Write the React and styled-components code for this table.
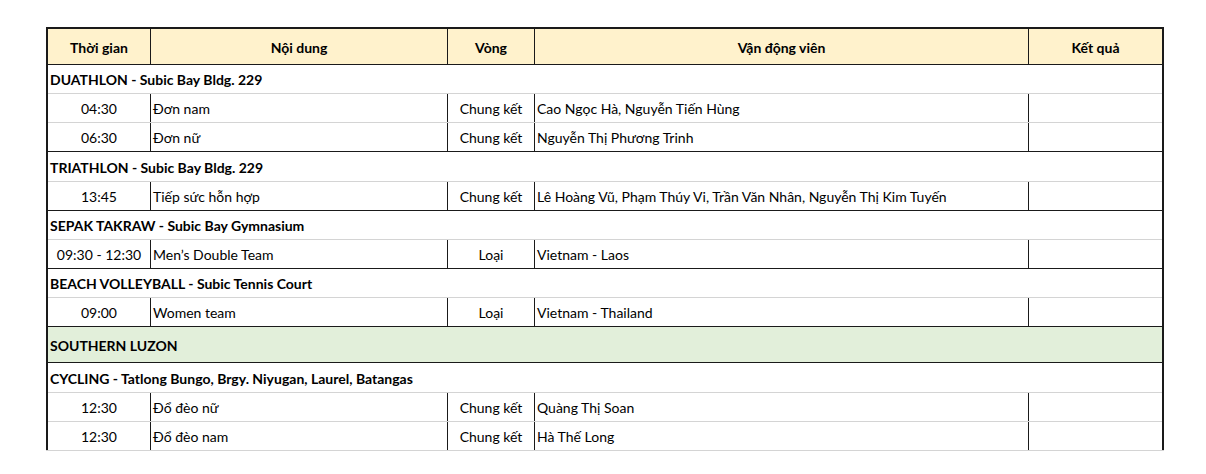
import React from 'react';
import styled, { createGlobalStyle } from 'styled-components';

const GlobalStyle = createGlobalStyle`
    body {
        margin: 0;
        background: #ffffff;
        font-family: Lato, 'Liberation Sans', sans-serif;
        color: #000000;
    }
`

const Page = styled.div`
    padding: 27px 0 0 46px;
`

const Sheet = styled.div`
    width: 1118px;
    border: 2px solid #1a1a1a;
    border-bottom: none;
    box-sizing: border-box;
    font-size: 14px;
`

const Row = styled.div`
    display: grid;
    grid-template-columns: 102px 297px 87px 494px 134px;
    height: ${p => p.$h || 29}px;
    box-sizing: border-box;
    border-top: 1px solid ${p => (p.$dark ? '#1a1a1a' : '#d4d4d4')};
    background: ${p => p.$bg || 'transparent'};
`

const HeadRow = styled(Row)`
    background: #fff2cc;
    border-top: none;
    font-weight: bold;
`

const Cell = styled.div`
    display: flex;
    align-items: center;
    justify-content: ${p => (p.$left ? 'flex-start' : 'center')};
    padding: 1px 2px 0;
    box-sizing: border-box;
    white-space: nowrap;
    overflow: hidden;
    border-left: ${p => (p.$first ? 'none' : '1px solid #1a1a1a')};
`

const Section = styled.div`
    grid-column: 1 / -1;
    display: flex;
    align-items: center;
    padding: 1px 2px 0;
    font-weight: bold;
`

const Bottom = styled.div`
    width: 1118px;
    height: 1px;
    background: #d4d4d4;
`

const rows = [
    { section: 'DUATHLON - Subic Bay Bldg. 229', h: 29 },
    { time: '04:30', event: 'Đơn nam', round: 'Chung kết', athletes: 'Cao Ngọc Hà, Nguyễn Tiến Hùng' },
    { time: '06:30', event: 'Đơn nữ', round: 'Chung kết', athletes: 'Nguyễn Thị Phương Trinh' },
    { section: 'TRIATHLON - Subic Bay Bldg. 229', h: 30 },
    { time: '13:45', event: 'Tiếp sức hỗn hợp', round: 'Chung kết', athletes: 'Lê Hoàng Vũ, Phạm Thúy Vi, Trần Văn Nhân, Nguyễn Thị Kim Tuyến' },
    { section: 'SEPAK TAKRAW - Subic Bay Gymnasium', h: 29 },
    { time: '09:30 - 12:30', event: 'Men’s Double Team', round: 'Loại', athletes: 'Vietnam - Laos' },
    { section: 'BEACH VOLLEYBALL - Subic Tennis Court', h: 29 },
    { time: '09:00', event: 'Women team', round: 'Loại', athletes: 'Vietnam - Thailand' },
    { section: 'SOUTHERN LUZON', h: 36, bg: '#e2efda' },
    { section: 'CYCLING - Tatlong Bungo, Brgy. Niyugan, Laurel, Batangas', h: 30 },
    { time: '12:30', event: 'Đổ đèo nữ', round: 'Chung kết', athletes: 'Quàng Thị Soan' },
    { time: '12:30', event: 'Đổ đèo nam', round: 'Chung kết', athletes: 'Hà Thế Long' },
]

export default function App() {
    return (
        <Page>
            <GlobalStyle />
            <Sheet>
                <HeadRow $h={35}>
                    <Cell $first>Thời gian</Cell>
                    <Cell>Nội dung</Cell>
                    <Cell>Vòng</Cell>
                    <Cell>Vận động viên</Cell>
                    <Cell>Kết quả</Cell>
                </HeadRow>
                {rows.map((r, i) => {
                    if (r.section) {
                        return (
                            <Row key={i} $h={r.h} $dark $bg={r.bg}>
                                <Section>{r.section}</Section>
                            </Row>
                        );
                    }
                    return (
                        <Row key={i} $dark={false}>
                            <Cell $first>{r.time}</Cell>
                            <Cell $left>{r.event}</Cell>
                            <Cell>{r.round}</Cell>
                            <Cell $left>{r.athletes}</Cell>
                            <Cell />
                        </Row>
                    );
                })}
            </Sheet>
            <Bottom />
        </Page>
    )
}
